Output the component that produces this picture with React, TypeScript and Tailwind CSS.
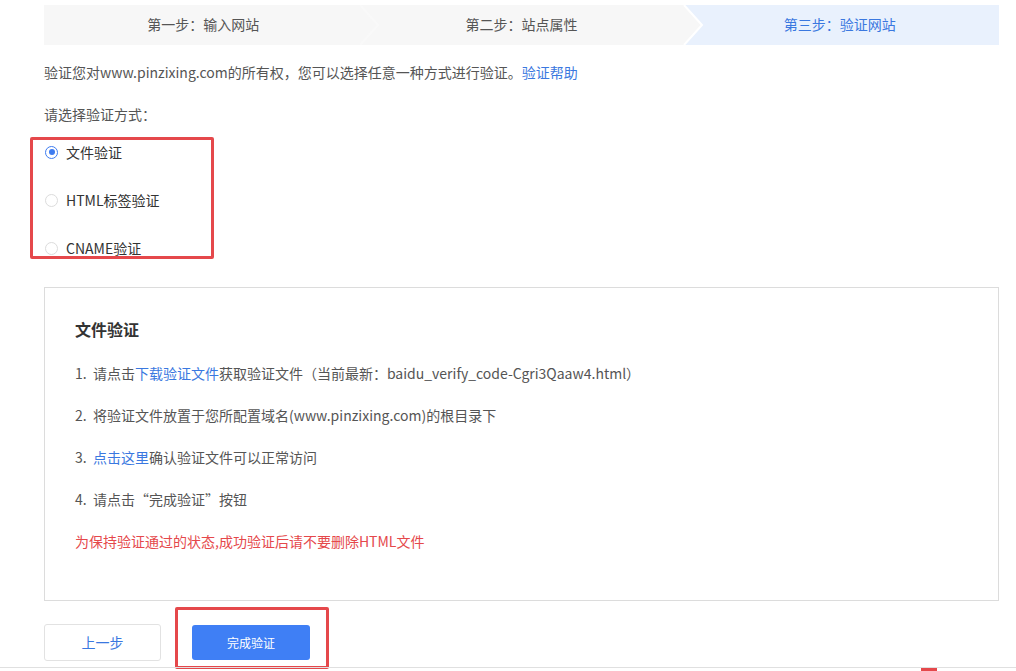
import React from "react";

const font = { fontFamily: '"Noto Sans CJK SC", "Noto Sans", sans-serif' };

function Radio({ checked, label }: { checked?: boolean; label: string }) {
  return (
    <div className="flex items-center h-[20px]">
      <span
        className={
          checked
            ? "w-[13px] h-[13px] rounded-full border border-[#3e7cf0] flex items-center justify-center bg-white"
            : "w-[13px] h-[13px] rounded-full border border-[#dcdcdc] bg-white"
        }
      >
        {checked && <span className="w-[6px] h-[6px] rounded-full bg-[#3e7cf0]" />}
      </span>
      <span className="ml-[8px] text-[14px] text-[#333]">{label}</span>
    </div>
  );
}

export default function App() {
  return (
    <div className="relative w-[1016px] h-[671px] bg-white overflow-hidden" style={font}>
      <div className="pl-[44px] w-[999px]">
        {/* step bar */}
        <div className="mt-[5px] flex h-[40px] bg-[#f7f7f7] text-[14px] leading-[39px]">
          <div className="relative flex-1 text-center text-[#555]">
            第一步：输入网站
            <svg className="absolute right-[-18px] top-0 z-10" width="20" height="40" viewBox="0 0 20 40">
              <polyline points="0,0 18,20 0,40" fill="#f7f7f7" stroke="#f9f9f9" strokeWidth="2" />
            </svg>
          </div>
          <div className="relative flex-1 text-center text-[#555]">第二步：站点属性</div>
          <div className="relative flex-1 text-center text-[#3a78e0] bg-[#e9f1fd]">
            <svg className="absolute left-0 top-0" width="24" height="40" viewBox="0 0 24 40">
              <polygon points="0,0 3,0 21,20 3,40 0,40" fill="#f7f7f7" />
              <polyline points="3,0 21,20 3,40" fill="none" stroke="#ffffff" strokeWidth="2" />
            </svg>
            第三步：验证网站
          </div>
        </div>

        <div className="mt-[17px] h-[20px] leading-[20px] text-[14px] text-[#555]">
          验证您对www.pinzixing.com的所有权，您可以选择任意一种方式进行验证。
          <span className="text-[#3a78e0]">验证帮助</span>
        </div>

        <div className="mt-[22px] h-[20px] leading-[20px] text-[14px] text-[#555]">请选择验证方式：</div>

        <div className="mt-[18px] ml-[1px] flex flex-col gap-[28px]">
          <Radio checked label="文件验证" />
          <Radio label="HTML标签验证" />
          <Radio label="CNAME验证" />
        </div>

        <div className="mt-[29px] h-[314px] border border-[#dcdcdc] pl-[30px] pt-[29px]">
          <div className="h-[24px] leading-[24px] text-[16px] font-bold text-[#333]">文件验证</div>
          <div className="mt-[22px] flex flex-col gap-[22px] text-[14px] text-[#555] leading-[20px]">
            <div>
              1.&nbsp;&nbsp;请点击<span className="text-[#3a78e0]">下载验证文件</span>获取验证文件（当前最新：baidu_verify_code-Cgri3Qaaw4.html）
            </div>
            <div>2.&nbsp;&nbsp;将验证文件放置于您所配置域名(www.pinzixing.com)的根目录下</div>
            <div>
              3.&nbsp;&nbsp;<span className="text-[#3a78e0]">点击这里</span>确认验证文件可以正常访问
            </div>
            <div>4.&nbsp;&nbsp;请点击“完成验证”按钮</div>
            <div className="text-[#e5484b]">为保持验证通过的状态,成功验证后请不要删除HTML文件</div>
          </div>
        </div>

        <div className="mt-[23px] flex items-center">
          <button className="w-[117px] h-[37px] border border-[#e2e2e2] rounded-[3px] bg-white text-[14px] text-[#3a78e0]">
            上一步
          </button>
          <button className="ml-[31px] w-[118px] h-[35px] rounded-[3px] bg-[#3f7ff5] text-[12px] text-white">
            完成验证
          </button>
        </div>
      </div>

      {/* annotation boxes */}
      <div className="absolute left-[30px] top-[137px] w-[184px] h-[122px] border-[3px] border-[#e5484b] rounded-[2px]" />
      <div className="absolute left-[175px] top-[607px] w-[154px] h-[62px] border-[3px] border-[#e5484b] rounded-[2px]" />

      {/* bottom line */}
      <div className="absolute left-0 right-0 top-[667px] h-[1px] bg-[#e0e0e0]" />
      <div className="absolute left-[921px] top-[668px] w-[16px] h-[3px] bg-[#e5484b]" />
    </div>
  );
}
